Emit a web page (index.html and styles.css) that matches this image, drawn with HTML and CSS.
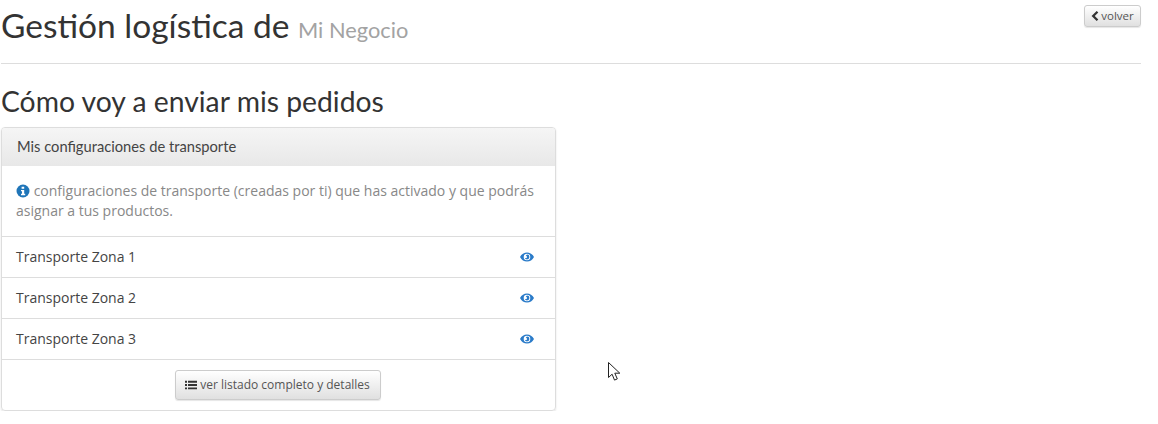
FILE: index.html
```html
<!DOCTYPE html>
<html lang="es">

<head>
  <meta charset="UTF-8">
  <meta name="viewport" content="width=device-width, initial-scale=1.0">
  <title>Gestión logística</title>
  <link rel="stylesheet" href="styles.css">
</head>

<body>
  <div class="page">
    <div class="page-header">
      <h1>Gestión logística de <small>Mi Negocio</small></h1>
      <a href="#" class="btn btn-xs">
        <svg class="icon-chevron" viewBox="0 0 8 10"><path d="M6.500 .8 2.200 5l4.300 4.200" fill="none" stroke="currentColor" stroke-width="2.300"/></svg>
        volver
      </a>
    </div>

    <h2>Cómo voy a enviar mis pedidos</h2>

    <div class="panel">
      <div class="panel-heading">Mis configuraciones de transporte</div>
      <div class="panel-body">
        <svg class="icon-info" viewBox="0 0 14 14">
          <circle cx="7" cy="7" r="6.5" fill="#1f75b8"/>
          <path d="M5.6 2.8h2.6v2H5.6zM5 5.9h3.2v3.9h1v1.4H5V9.8h1V7.3H5z" fill="#fff"/>
        </svg>
        configuraciones de transporte (creadas por ti) que has activado y que podrás asignar a tus productos.
      </div>
      <ul class="list">
        <li>Transporte Zona 1
          <svg class="icon-eye" viewBox="0 0 14 10"><use href="#eye"/></svg>
        </li>
        <li>Transporte Zona 2
          <svg class="icon-eye" viewBox="0 0 14 10"><use href="#eye"/></svg>
        </li>
        <li>Transporte Zona 3
          <svg class="icon-eye" viewBox="0 0 14 10"><use href="#eye"/></svg>
        </li>
      </ul>
      <div class="panel-footer">
        <a href="#" class="btn btn-sm">
          <svg class="icon-list" viewBox="0 0 12 10">
            <path d="M0 .8h2v1.9H0zM3 .8h9v1.9H3zM0 4.1h2V6H0zM3 4.1h9V6H3zM0 7.4h2v1.9H0zM3 7.4h9v1.9H3z" fill="currentColor"/>
          </svg>
          ver listado completo y detalles
        </a>
      </div>
    </div>
  </div>

  <svg class="defs" width="0" height="0">
    <symbol id="eye" viewBox="0 0 14 10">
      <path fill-rule="evenodd" fill="#2a7bc9" d="M0 5C1.6 2 4 .4 7 .4S12.400 2 14 5c-1.600 3-4 4.600-7 4.600S1.600 8 0 5zm7-3.300a3.300 3.300 0 1 0 0 6.600 3.300 3.300 0 0 0 0-6.600z"/>
      <path fill="#2a7bc9" d="M7 2.600a2.400 2.400 0 1 1-2.400 2.400c0 .8.700 1.200 1.300 1.200S7 5.600 7 5 6.600 3.900 6 3.900 7 3 7 2.600z"/>
    </symbol>
  </svg>

  <svg class="cursor" viewBox="0 0 13 20">
    <path d="M.5.500v15l3.600-3.300 2.400 5.900 2.800-1.200-2.500-5.700h5z" fill="#fff" stroke="#222" stroke-width="1"/>
  </svg>
</body>

</html>
```

FILE: styles.css
```css
* {
  margin: 0;
  padding: 0;
  box-sizing: border-box;
}

body {
  font-family: 'Open Sans', sans-serif;
  font-size: 13px;
  line-height: 20px;
  color: #444;
  background: white;
}

.page {
  width: 1141px;
  padding-left: 1px;
}

.page-header {
  display: flex;
  justify-content: space-between;
  align-items: flex-start;
  height: 64px;
  padding-top: 3px;
  border-bottom: 1px solid #ddd;
}

h1,
h2 {
  font-family: Lato, sans-serif;
  font-weight: 400;
  color: #333;
}

h1 {
  font-size: 33.500px;
  line-height: 44px;
}

h1 small {
  font-size: 21.800px;
  color: #a3a3a3;
}

h2 {
  font-size: 28.300px;
  line-height: 36px;
  margin-top: 19px;
  margin-bottom: 8px;
}

.btn {
  display: inline-flex;
  align-items: center;
  justify-content: center;
  color: #555;
  text-decoration: none;
  background: linear-gradient(#fff, #e0e0e0);
  border: 1px solid #ccc;
  border-radius: 3px;
  box-shadow: 0 1px 1px rgba(0, 0, 0, 0.1);
}

.btn-xs {
  width: 57px;
  height: 22px;
  margin-top: 2px;
  font-size: 11.500px;
  gap: 2px;
}

.btn-sm {
  width: 206px;
  height: 30px;
  font-size: 12px;
  gap: 3px;
}

.icon-chevron {
  width: 8px;
  height: 10px;
  color: #333;
}

.icon-list {
  width: 12px;
  height: 10px;
  color: #333;
}

.panel {
  width: 555px;
  border: 1px solid #ddd;
  border-radius: 4px;
  box-shadow: 0 1px 2px rgba(0, 0, 0, 0.12);
}

.panel-heading {
  height: 38px;
  padding: 0 15px;
  font-family: Lato, sans-serif;
  font-size: 14.700px;
  line-height: 37px;
  background: linear-gradient(#f5f5f5, #e8e8e8);
  border-radius: 3px 3px 0 0;
}

.panel-body {
  height: 70px;
  padding: 15px 14px;
  font-size: 14px;
  color: #888;
}

.icon-info {
  width: 14px;
  height: 14px;
  vertical-align: -2px;
}

.list {
  list-style: none;
}

.list li {
  display: flex;
  justify-content: space-between;
  align-items: center;
  height: 41px;
  padding: 0 21px 0 14px;
  border-top: 1px solid #ddd;
  font-size: 14px;
}

.icon-eye {
  width: 14px;
  height: 10px;
}

.panel-footer {
  display: flex;
  justify-content: center;
  height: 51px;
  padding: 10px 2px 0 0;
  border-top: 1px solid #ddd;
}

.defs {
  position: absolute;
}

.cursor {
  position: absolute;
  left: 608px;
  top: 362px;
  width: 13px;
  height: 20px;
}
```
